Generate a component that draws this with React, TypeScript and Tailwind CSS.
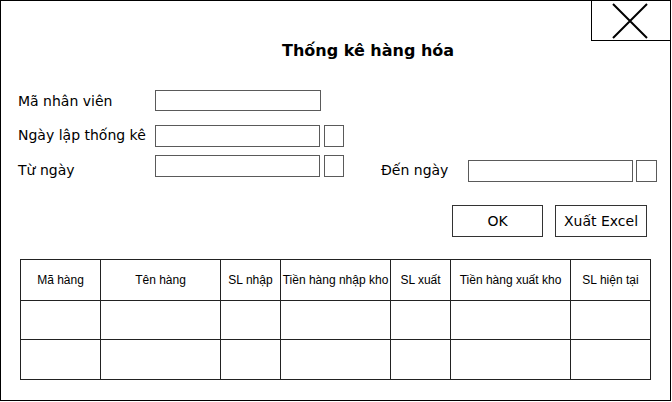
import React from "react";

const labelFont = { fontFamily: '"DejaVu Sans", Verdana, sans-serif' };

function Box({ w, h = "h-[21px]" }: { w: string; h?: string }) {
  return <div className={`${w} ${h} border border-[#5a5a5a] bg-white`} />;
}

export default function App() {
  const cols = [
    "Mã hàng",
    "Tên hàng",
    "SL nhập",
    "Tiền hàng nhập kho",
    "SL xuất",
    "Tiền hàng xuất kho",
    "SL hiện tại",
  ];
  return (
    <div className="w-[671px] h-[401px] border border-black bg-white flex flex-col text-black" style={labelFont}>
      <div className="flex justify-end h-[40px] shrink-0">
        <div className="w-[79px] h-[40px] border-l border-b border-black flex items-center justify-center">
          <svg width="40" height="40" viewBox="0 0 40 40" className="ml-[-2px]">
            <path d="M3 3 L37 37 M37 3 L3 37" stroke="#000" strokeWidth="2" fill="none" />
          </svg>
        </div>
      </div>
      <div className="h-[20px] leading-[20px] pl-[281px] text-[16px] font-bold">Thống kê hàng hóa</div>

      <div className="mt-[29px] flex items-center pl-[17px] h-[21px] text-[14px]">
        <div className="w-[137px] mt-[2px]">Mã nhân viên</div>
        <Box w="w-[166px]" />
      </div>

      <div className="mt-[14px] flex items-center pl-[17px] h-[22px] text-[14px]">
        <div className="w-[137px] mt-[-1px]">Ngày lập thống kê</div>
        <Box w="w-[165px]" h="h-[22px]" />
        <div className="ml-[4px]">
          <Box w="w-[20px]" h="h-[22px]" />
        </div>
      </div>

      <div className="mt-[8px] flex items-start pl-[17px] h-[27px] text-[14px]">
        <div className="w-[137px] mt-[5px] leading-[20px]">Từ ngày</div>
        <Box w="w-[165px]" h="h-[22px]" />
        <div className="ml-[4px]">
          <Box w="w-[20px]" h="h-[22px]" />
        </div>
        <div className="ml-[37px] w-[87px] mt-[5px] leading-[20px]">Đến ngày</div>
        <div className="mt-[5px] flex">
          <Box w="w-[165px]" h="h-[22px]" />
          <div className="ml-[3px]">
            <Box w="w-[21px]" h="h-[22px]" />
          </div>
        </div>
      </div>

      <div className="mt-[23px] flex pl-[451px] gap-[12px] text-[14px]">
        <button className="w-[91px] h-[32px] border border-[#333] bg-white flex items-center justify-center">OK</button>
        <button className="w-[92px] h-[32px] border border-[#333] bg-white flex items-center justify-center">Xuất Excel</button>
      </div>

      <div className="mt-[22px] ml-[19px] w-[631px] border-l border-t border-[#222] grid grid-cols-[80px_120px_60px_110px_60px_120px_80px]" style={{ fontFamily: '"Liberation Sans", Arial, sans-serif' }}>
        {cols.map((c) => (
          <div key={c} className="h-[41px] border-r border-b border-[#222] flex items-center justify-center text-[12px] whitespace-nowrap">
            {c}
          </div>
        ))}
        {cols.map((c) => (
          <div key={"a" + c} className="h-[39px] border-r border-b border-[#222]" />
        ))}
        {cols.map((c) => (
          <div key={"b" + c} className="h-[40px] border-r border-b border-[#222]" />
        ))}
      </div>
    </div>
  );
}
